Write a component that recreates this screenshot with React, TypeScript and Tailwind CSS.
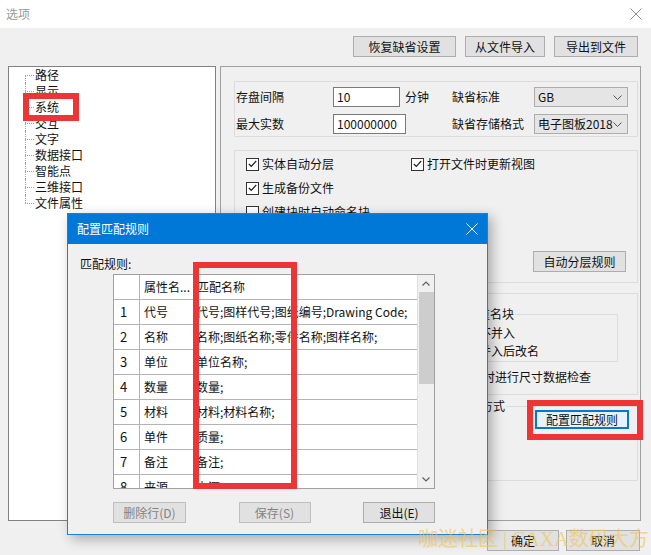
import type { ReactNode } from "react";

// Windows-style "选项" options window with the "配置匹配规则" dialog on top

const treeItems = ["路径", "显示", "系统", "交互", "文字", "数据接口", "智能点", "三维接口", "文件属性"];

const rules = [
  { no: 1, attr: "代号", match: "代号;图样代号;图纸编号;Drawing Code;" },
  { no: 2, attr: "名称", match: "名称;图纸名称;零件名称;图样名称;" },
  { no: 3, attr: "单位", match: "单位名称;" },
  { no: 4, attr: "数量", match: "数量;" },
  { no: 5, attr: "材料", match: "材料;材料名称;" },
  { no: 6, attr: "单件", match: "质量;" },
  { no: 7, attr: "备注", match: "备注;" },
  { no: 8, attr: "来源", match: "来源;" },
];

function Btn({ children, className = "" }: { children: ReactNode; className?: string }) {
  return (
    <div
      className={`flex h-[21px] items-center justify-center border border-[#adadad] bg-[#e1e1e1] text-[12px] text-[#111] ${className}`}
    >
      {children}
    </div>
  );
}

function Check({ label, checked = false }: { label: string; checked?: boolean }) {
  return (
    <div className="flex h-[24px] items-center gap-[3px]">
      <span className="flex h-[13px] w-[13px] items-center justify-center border border-[#333] bg-white">
        {checked && (
          <svg width="9" height="8" viewBox="0 0 9 8">
            <path d="M0.8 4 L3.3 6.5 L8.2 1" fill="none" stroke="#222" strokeWidth="1.2" />
          </svg>
        )}
      </span>
      <span>{label}</span>
    </div>
  );
}

function Radio({ label }: { label: string }) {
  return (
    <div className="flex h-[18px] items-center gap-[2px]">
      <span className="h-[12px] w-[12px] rounded-full border border-[#333] bg-white" />
      <span>{label}</span>
    </div>
  );
}

function Select({ value }: { value: string }) {
  return (
    <div className="flex h-[20px] w-[94px] items-center justify-between border border-[#adadad] bg-[#e5e5e5] pl-[3px] pr-[5px] text-[12px]">
      <span>{value}</span>
      <svg width="9" height="5" viewBox="0 0 9 5">
        <path d="M0.5 0.5 L4.5 4.5 L8.5 0.5" fill="none" stroke="#555" strokeWidth="1" />
      </svg>
    </div>
  );
}

function CloseIcon({ color, size }: { color: string; size: number }) {
  return (
    <svg width={size} height={size} viewBox="0 0 12 12">
      <path d="M0.5 0.5 L11.5 11.5 M11.5 0.5 L0.5 11.5" stroke={color} strokeWidth="1" />
    </svg>
  );
}

function MatchDialog() {
  return (
    <div className="absolute left-[67px] top-[213px] flex h-[322px] w-[421px] flex-col border border-[#1a82d4] bg-[#f0f0f0] shadow-[4px_4px_12px_rgba(0,0,0,0.3)]">
      <div className="flex h-[30px] items-center justify-between bg-[#0078d7] pl-[9px] pr-[9px] text-[12px] text-white">
        <span>配置匹配规则</span>
        <CloseIcon color="#ffffff" size={12} />
      </div>
      <div className="flex flex-col pl-[12px] pt-[12px]">
        <span className="leading-[16px]">匹配规则:</span>
        <div className="ml-[33px] mt-[2px] flex h-[215px] w-[322px] border border-[#a0a0a0] bg-white">
          <div className="flex w-[304px] flex-col overflow-hidden">
            <div className="flex h-[25px] shrink-0 border-b border-[#b4b4b4]">
              <div className="w-[26px] border-r border-[#b4b4b4]" />
              <div className="flex w-[54px] items-center border-r border-[#b4b4b4] pl-[4px]">属性名...</div>
              <div className="flex flex-1 items-center pl-[3px]">匹配名称</div>
            </div>
            {rules.map((r) => (
              <div key={r.no} className="flex h-[25px] shrink-0 border-b border-[#b4b4b4]">
                <div className="flex w-[26px] items-center border-r border-[#b4b4b4] pl-[6px] text-[13px]">{r.no}</div>
                <div className="flex w-[54px] items-center border-r border-[#b4b4b4] pl-[4px]">{r.attr}</div>
                <div className="flex flex-1 items-center overflow-hidden whitespace-nowrap pl-[2px]">{r.match}</div>
              </div>
            ))}
          </div>
          <div className="flex w-[17px] flex-col items-center border-l border-[#e0e0e0] bg-[#f0f0f0]">
            <div className="flex h-[17px] items-center justify-center">
              <svg width="8" height="5" viewBox="0 0 8 5">
                <path d="M0.5 4.5 L4 1 L7.5 4.5" fill="none" stroke="#606060" strokeWidth="1.2" />
              </svg>
            </div>
            <div className="h-[92px] w-[15px] bg-[#cdcdcd]" />
            <div className="flex-1" />
            <div className="flex h-[17px] items-center justify-center">
              <svg width="8" height="5" viewBox="0 0 8 5">
                <path d="M0.5 0.5 L4 4 L7.5 0.5" fill="none" stroke="#606060" strokeWidth="1.2" />
              </svg>
            </div>
          </div>
        </div>
        <div className="ml-[33px] mt-[13px] flex w-[322px] justify-between">
          <Btn className="w-[73px] border-[#bfbfbf] bg-[#cccccc] text-[#838383]">删除行(D)</Btn>
          <Btn className="w-[72px] border-[#bfbfbf] bg-[#cccccc] text-[#838383]">保存(S)</Btn>
          <Btn className="w-[72px]">退出(E)</Btn>
        </div>
      </div>
    </div>
  );
}

export default function App() {
  return (
    <div className="relative h-[555px] w-[651px] overflow-hidden bg-[#f0f0f0] text-[12px] leading-[16px] text-[#111] [font-family:'Noto_Sans_CJK_SC',sans-serif]">
      {/* title bar */}
      <div className="flex h-[28px] items-center justify-between bg-white pl-[6px] pr-[9px]">
        <span className="text-[#9a9a9a]">选项</span>
        <CloseIcon color="#8a8a8a" size={12} />
      </div>

      {/* toolbar */}
      <div className="flex h-[38px] justify-end gap-[9px] pr-[13px] pt-[8px]">
        <Btn className="w-[103px]">恢复缺省设置</Btn>
        <Btn className="w-[80px]">从文件导入</Btn>
        <Btn className="w-[84px]">导出到文件</Btn>
      </div>

      {/* body */}
      <div className="flex gap-[4px] pl-[8px]">
        <div className="h-[455px] w-[208px] border border-[#828282] bg-white">
          {treeItems.map((t, i) => (
            <div key={t} className="flex h-[16px]">
              <div className="ml-[16px] flex w-[9px] flex-col">
                <div className={`h-[8px] ${i > 0 ? "border-l border-dotted border-[#a0a0a0]" : ""}`} />
                <div
                  className={`h-[8px] border-t border-dotted border-[#a0a0a0] ${i < treeItems.length - 1 ? "border-l" : ""}`}
                />
              </div>
              <span className="pl-[1px]">{t}</span>
            </div>
          ))}
        </div>

        <div className="flex h-[455px] w-[421px] flex-col border border-[#a0a0a0] pl-[13px] pr-[2px] pt-[14px]">
          {/* group 1 */}
          <div className="flex h-[56px] flex-col gap-[7px] border border-[#dcdcdc] pl-[1px] pt-[5px]">
            <div className="flex items-center">
              <span className="w-[97px]">存盘间隔</span>
              <div className="flex h-[20px] w-[67px] items-center border border-[#7a7a7a] bg-white pl-[3px]">10</div>
              <span className="ml-[5px] w-[47px]">分钟</span>
              <span className="w-[82px]">缺省标准</span>
              <Select value="GB" />
            </div>
            <div className="flex items-center">
              <span className="w-[97px]">最大实数</span>
              <div className="flex h-[20px] w-[73px] items-center border border-[#7a7a7a] bg-white pl-[3px]">100000000</div>
              <span className="w-[46px]" />
              <span className="w-[82px]">缺省存储格式</span>
              <Select value="电子图板2018" />
            </div>
          </div>

          {/* group 2 */}
          <div className="mt-[13px] flex h-[133px] flex-col border border-[#dcdcdc] pl-[11px] pt-[1px]">
            <div className="flex">
              <div className="w-[165px]">
                <Check label="实体自动分层" checked />
              </div>
              <Check label="打开文件时更新视图" checked />
            </div>
            <Check label="生成备份文件" checked />
            <Check label="创建块时自动命名块" />
            <div className="mr-[11px] mt-[27px] flex justify-end">
              <Btn className="h-[20px] w-[93px]">自动分层规则</Btn>
            </div>
          </div>

          {/* group 3 */}
          <div className="mt-[10px] flex h-[102px] flex-col border border-[#dcdcdc]">
            <fieldset className="ml-[210px] mr-[19px] mt-[12px] border border-[#dcdcdc] pb-[1px] pt-[2px]">
              <legend className="ml-[7px] px-[1px] leading-[16px]">插入重名块</legend>
              <div className="pl-[19px]">
                <Radio label="不并入" />
                <Radio label="并入后改名" />
              </div>
            </fieldset>
            <div className="ml-[208px] mt-[3px]">
              <Check label="保存时进行尺寸数据检查" />
            </div>
          </div>

          {/* group 4 */}
          <fieldset className="mt-[7px] h-[79px] border border-[#dcdcdc]">
            <legend className="ml-[197px] px-[1px] leading-[8px]">属性匹配方式</legend>
            <div className="mr-[8px] flex justify-end">
              <div className="flex h-[19px] w-[94px] items-center justify-center border-2 border-[#0078d7] bg-[#e5f1fb]">
                配置匹配规则
              </div>
            </div>
          </fieldset>
        </div>
      </div>

      {/* bottom buttons */}
      <div className="flex justify-end gap-[7px] pr-[11px] pt-[9px]">
        <Btn className="w-[72px]">确定</Btn>
        <Btn className="w-[74px]">取消</Btn>
      </div>

      <MatchDialog />

      {/* annotations */}
      <div className="absolute left-[23px] top-[93px] h-[28px] w-[56px] border-[6px] border-[#ee3535]" />
      <div className="absolute left-[193px] top-[262px] h-[227px] w-[104px] border-[6px] border-[#ee3535]" />
      <div className="absolute left-[527px] top-[400px] h-[40px] w-[116px] border-[6px] border-[#ee3535]" />

      {/* watermark */}
      <div className="pointer-events-none absolute left-[418px] top-[527px] whitespace-nowrap text-[20px] leading-[24px] text-[#f2c451] opacity-60 [font-family:'Liberation_Serif','Noto_Sans_CJK_SC',serif]">
        咖迷社区 | CAXA数码大方
      </div>
    </div>
  );
}
